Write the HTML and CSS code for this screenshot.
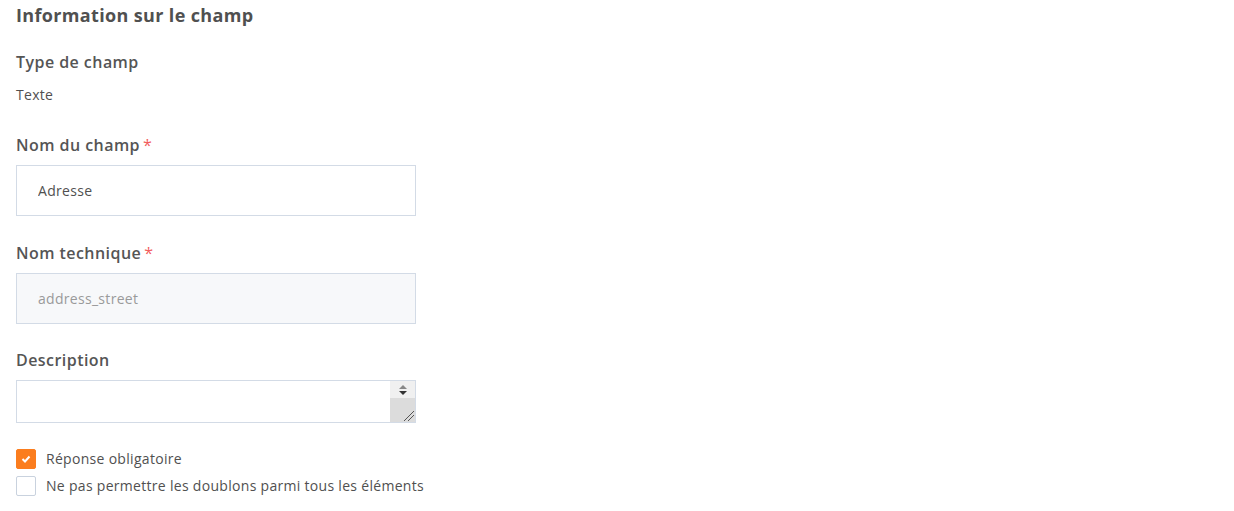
FILE: index.html
```html
<!DOCTYPE html>
<html lang="fr">
  <head>
    <meta charset="UTF-8" />
    <title>Information sur le champ</title>
    <link rel="stylesheet" href="styles.css">
  </head>
  <body>
    <section class="field-info">
      <h3>Information sur le champ</h3>

      <div class="group group-type">
        <label class="label">Type de champ</label>
        <p class="value">Texte</p>
      </div>

      <div class="group group-name">
        <label class="label">Nom du champ<span class="req">*</span></label>
        <input type="text" class="input" value="Adresse" />
      </div>

      <div class="group group-tech">
        <label class="label">Nom technique<span class="req">*</span></label>
        <input type="text" class="input" value="address_street" disabled />
      </div>

      <div class="group group-desc">
        <label class="label">Description</label>
        <div class="textarea-box">
          <textarea class="textarea"></textarea>
          <div class="scroller">
            <div class="spin">
              <svg width="10" height="12" viewBox="0 0 10 12">
                <path d="M1 5 L5 1 L9 5 Z" fill="#888" />
                <path d="M1 7 L5 11 L9 7 Z" fill="#333" />
              </svg>
            </div>
            <div class="grip">
              <svg width="12" height="12" viewBox="0 0 12 12">
                <path d="M1 11 L11 1 M5 11 L11 5" stroke="#555" stroke-width="1" />
              </svg>
            </div>
          </div>
        </div>
      </div>

      <div class="checks">
        <label class="check">
          <span class="box checked">
            <svg width="10" height="8" viewBox="0 0 10 8">
              <path d="M1.5 4 L4 6.5 L8.5 1.5" stroke="#fff" stroke-width="2" fill="none" />
            </svg>
          </span>
          Réponse obligatoire
        </label>
        <label class="check">
          <span class="box"></span>
          Ne pas permettre les doublons parmi tous les éléments
        </label>
      </div>
    </section>
  </body>
</html>
```

FILE: styles.css
```css
body {
  margin: 0;
  font-family: "Open Sans", Lato, sans-serif;
  color: #4f4f4f;
  background: #fff;
}

.field-info {
  padding: 3px 16px;
}

h3 {
  margin: 0 0 24px;
  font-size: 18px;
  line-height: 24px;
  font-weight: 700;
  letter-spacing: 0.35px;
  color: #505050;
}

.group-type {
  margin-bottom: 29px;
}

.group-name {
  margin-bottom: 26px;
}

.group-tech {
  margin-bottom: 25px;
}

.group-desc {
  margin-bottom: 26px;
}

.label {
  display: block;
  font-size: 16px;
  line-height: 22px;
  font-weight: 600;
  letter-spacing: 0.45px;
  color: #555;
  margin-bottom: 9px;
}

.req {
  color: #f25c5c;
  margin-left: 3px;
  font-weight: 400;
}

.value {
  margin: 12px 0 0;
  font-size: 14px;
  line-height: 20px;
  letter-spacing: 0.3px;
  color: #505050;
}

.input {
  display: block;
  box-sizing: border-box;
  width: 400px;
  height: 51px;
  padding: 0 21px;
  border: 1px solid #d3dbe6;
  border-radius: 0;
  font-family: inherit;
  font-size: 14px;
  letter-spacing: 0.3px;
  color: #505050;
  background: #fff;
  outline: none;
}

.input:disabled {
  background: #f7f8fa;
  color: #9a9a9a;
}

.textarea-box {
  display: flex;
  box-sizing: border-box;
  width: 400px;
  height: 43px;
  border: 1px solid #d3dbe6;
}

.textarea {
  flex: 1;
  border: none;
  resize: none;
  outline: none;
  font-family: inherit;
}

.scroller {
  width: 25px;
  display: flex;
  flex-direction: column;
}

.spin {
  height: 17px;
  background: #f0f0f0;
  display: flex;
  align-items: center;
  justify-content: center;
}

.grip {
  flex: 1;
  background: #dcdcdc;
  display: flex;
  align-items: flex-end;
  justify-content: flex-end;
}

.checks {
  display: flex;
  flex-direction: column;
  gap: 7px;
}

.check {
  display: flex;
  align-items: center;
  gap: 10px;
  font-size: 14px;
  line-height: 20px;
  letter-spacing: 0.3px;
  color: #505050;
}

.box {
  box-sizing: border-box;
  width: 20px;
  height: 20px;
  border: 1px solid #c9d2de;
  border-radius: 2px;
  background: #fff;
  display: flex;
  align-items: center;
  justify-content: center;
}

.box.checked {
  background: #fb7d1e;
  border-color: #fb7d1e;
}
```
